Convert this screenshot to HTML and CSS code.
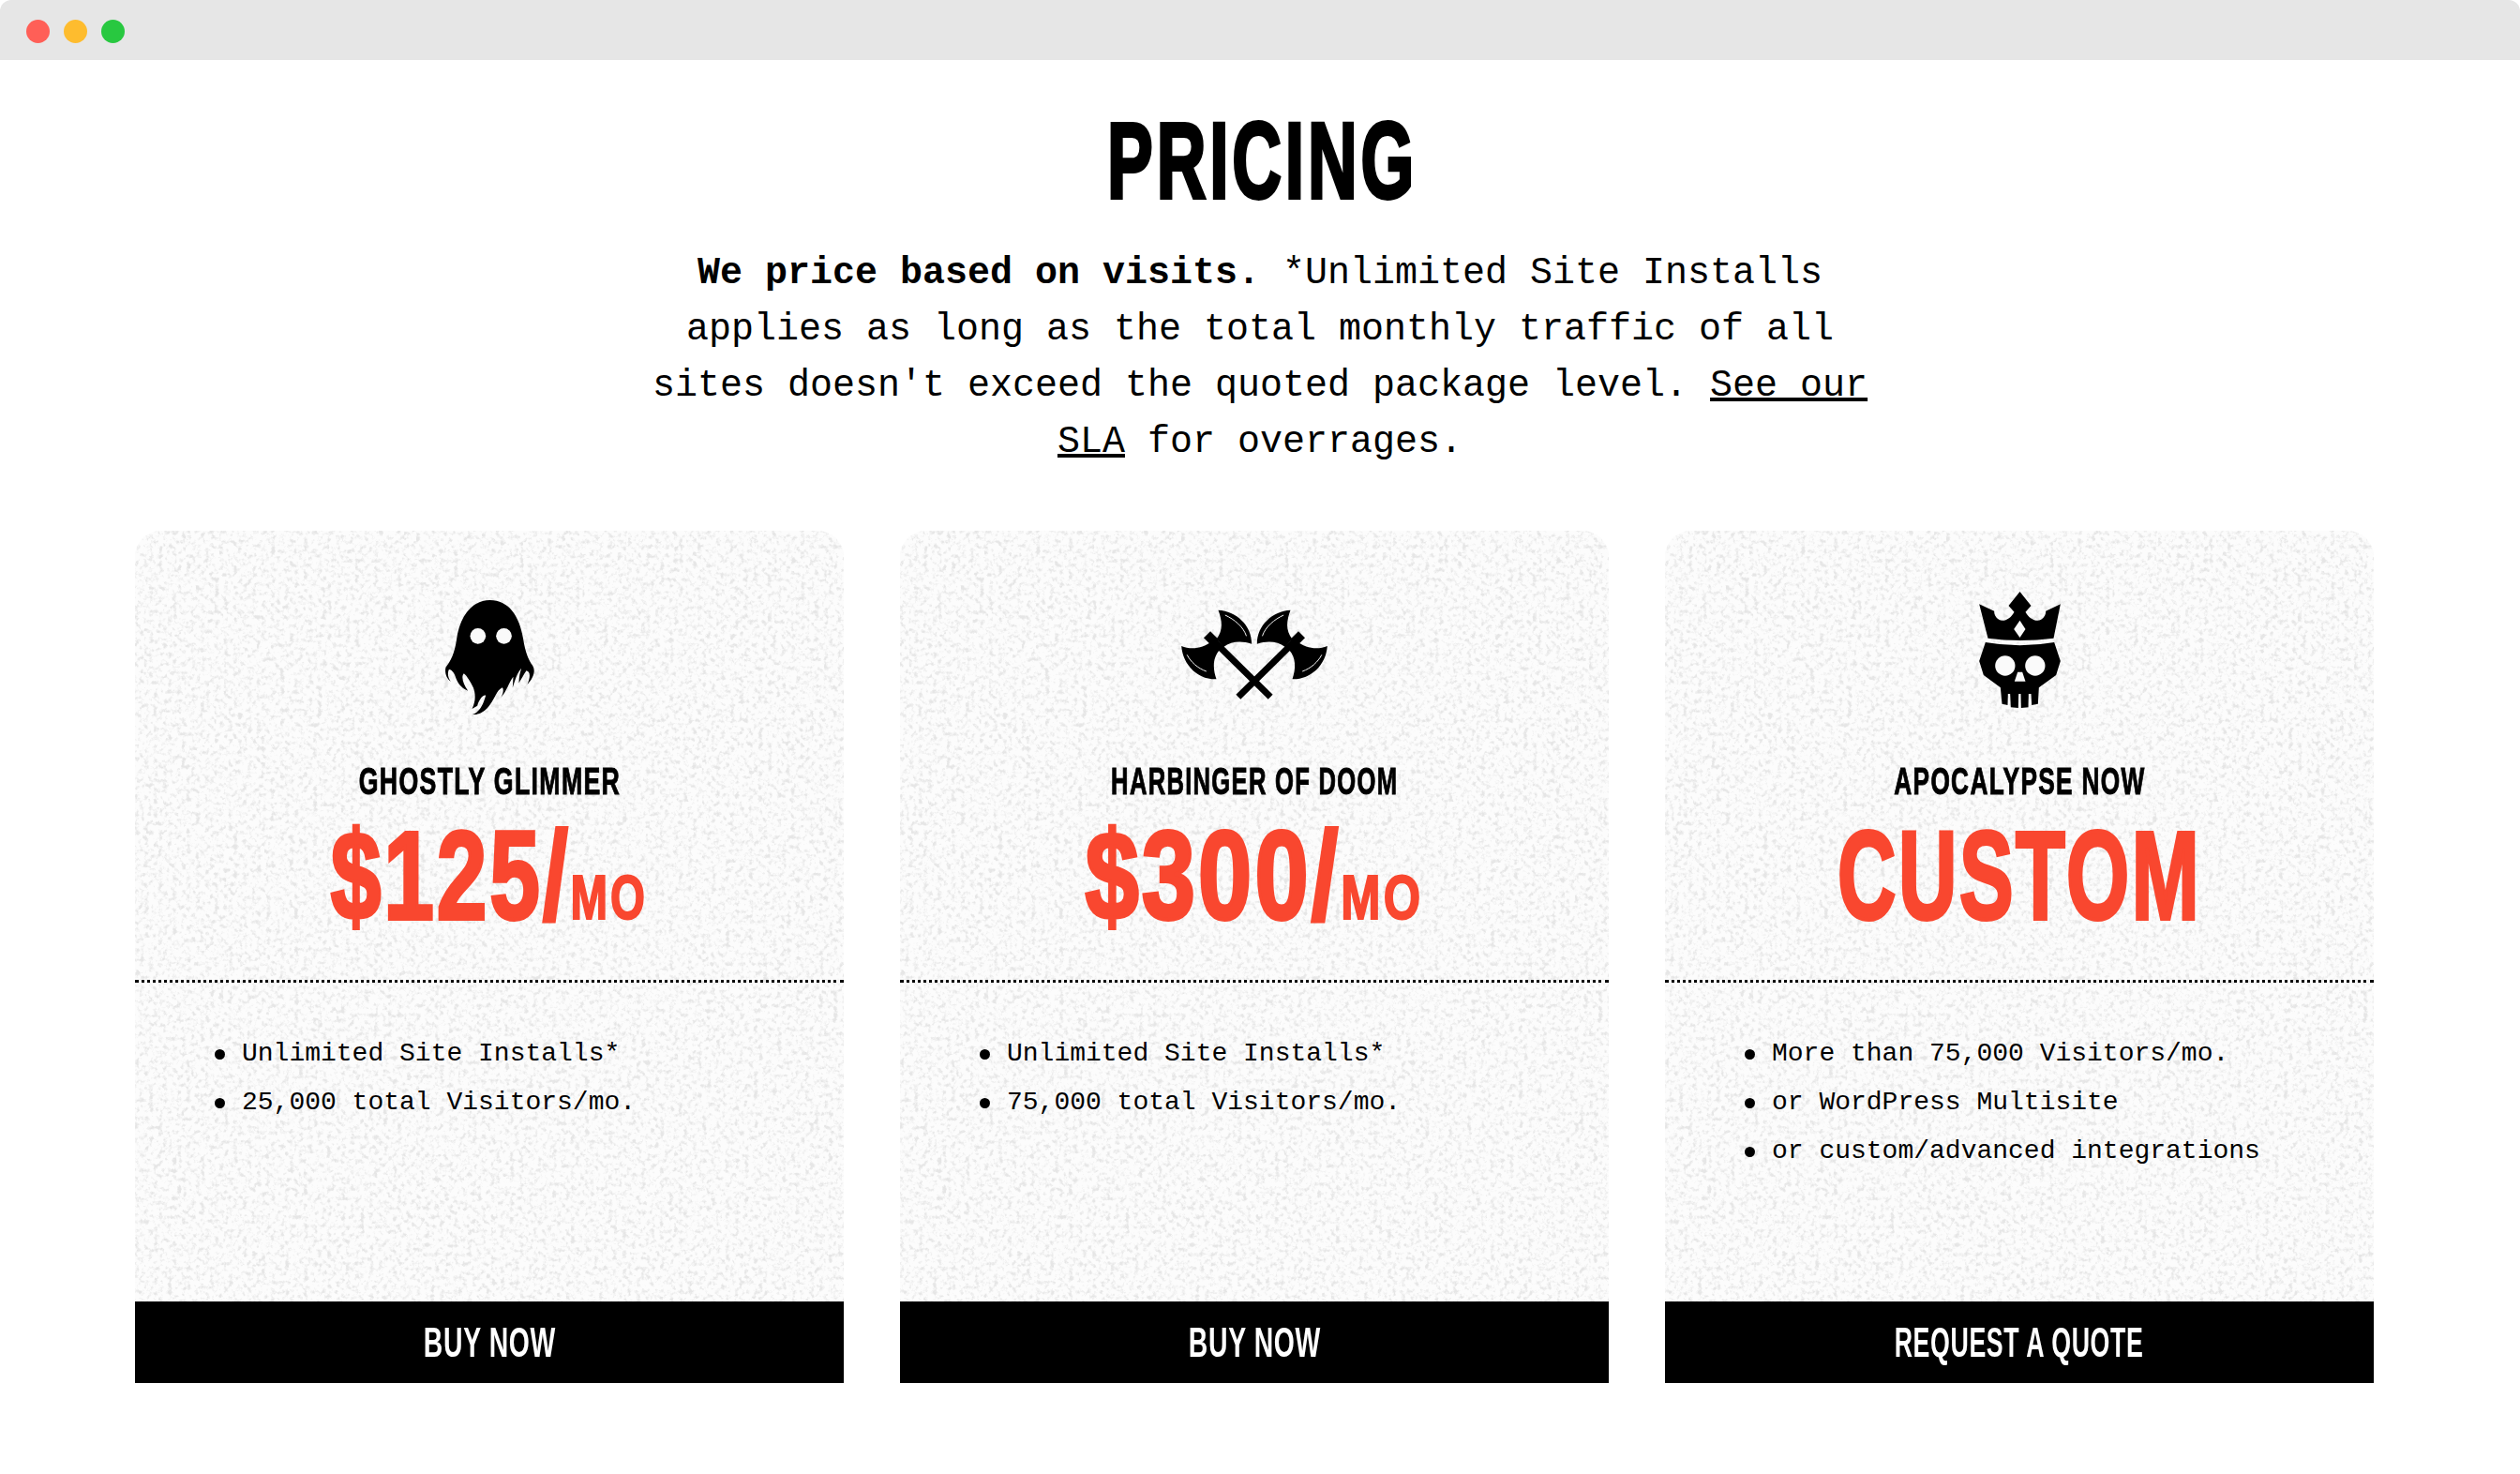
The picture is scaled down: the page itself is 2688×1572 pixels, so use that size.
FILE: index.html
```html
<!DOCTYPE html>
<html lang="en">
<head>
<meta charset="utf-8">
<title>Pricing</title>
<link rel="stylesheet" href="styles.css">
</head>
<body>
<header class="chrome">
  <span class="dot dot-red"></span>
  <span class="dot dot-yellow"></span>
  <span class="dot dot-green"></span>
</header>
<main class="page">
  <h1 class="title"><span class="fit-title">PRICING</span></h1>
  <p class="intro"><strong>We price based on visits.</strong> *Unlimited Site Installs applies as long as the total monthly traffic of all sites doesn't exceed the quoted package level. <a href="#">See our SLA</a> for overrages.</p>
  <section class="plans">
    <article class="plan">
      <div class="plan-head">
        <svg class="icon icon-ghost" viewBox="100 0 290 480" aria-hidden="true">
          <path d="M245 60C305 60 340 110 352 185C358 225 368 250 382 270C392 285 385 310 365 330C375 305 375 290 362 286C352 300 348 310 338 325C338 305 342 290 346 278C330 295 325 320 318 340L320 305C305 325 300 350 280 372C288 360 290 345 285 340C265 350 262 375 245 395C235 410 215 428 190 426C210 418 222 400 232 365C222 362 210 380 205 398L188 408C200 385 200 360 192 340C185 325 170 300 162 295C152 305 160 330 175 350C150 340 140 320 135 305C130 290 120 280 114 282C108 295 112 310 120 320C105 310 100 290 104 275C120 255 132 230 138 190C148 110 190 60 245 60Z"/>
          <circle class="knock" cx="207" cy="175" r="25"/>
          <circle class="knock" cx="290" cy="175" r="25"/>
        </svg>
        <h2 class="plan-name"><span class="fit-name-a">GHOSTLY GLIMMER</span></h2>
        <div class="price"><span class="fit-price-a">$125/<small class="per">MO</small></span></div>
      </div>
      <ul class="features">
        <li>Unlimited Site Installs*</li>
        <li>25,000 total Visitors/mo.</li>
      </ul>
      <a class="cta" href="#"><span class="fit-cta-a">BUY NOW</span></a>
    </article>
    <article class="plan">
      <div class="plan-head">
        <svg class="icon icon-axes" viewBox="60 -30 467 480" aria-hidden="true">
          <defs>
            <g id="axe">
              <path class="haft" d="M345 340L150 148"/>
              <path class="knob" d="M142 140L170 168"/>
              <path d="M178 62C235 65 285 110 285 170C255 160 220 160 195 180L172 155C195 125 190 95 178 62Z"/>
              <path d="M60 177C90 190 130 185 155 163L182 190C160 215 160 250 172 283C115 285 65 240 60 177Z"/>
              <path class="glint" d="M200 78C230 92 258 115 268 145"/>
              <path class="glint" d="M78 205C90 228 112 248 140 258"/>
            </g>
          </defs>
          <use href="#axe"/>
          <use href="#axe" transform="matrix(-1 0 0 1 587 0)"/>
        </svg>
        <h2 class="plan-name"><span class="fit-name-b">HARBINGER OF DOOM</span></h2>
        <div class="price"><span class="fit-price-b">$300/<small class="per">MO</small></span></div>
      </div>
      <ul class="features">
        <li>Unlimited Site Installs*</li>
        <li>75,000 total Visitors/mo.</li>
      </ul>
      <a class="cta" href="#"><span class="fit-cta-a">BUY NOW</span></a>
    </article>
    <article class="plan">
      <div class="plan-head">
        <svg class="icon icon-crown" viewBox="92 0 260 480" aria-hidden="true">
          <path d="M222 33L258 78L240 98C250 118 275 132 290 122C302 114 305 105 305 95L352 73L330 182Q222 196 120 182L92 73L140 95C140 105 143 114 155 122C170 132 194 118 204 98L186 78Z"/>
          <path class="knock" d="M222 125L240 153L222 180L203 153Z"/>
          <path d="M112 195Q222 215 332 195L352 255L338 300L283 340L280 392L260 396L258 360L250 360L249 403L226 405L225 360L218 360L217 405L193 403L191 360L184 360L183 396L165 392L160 340L106 300L92 255Z"/>
          <circle class="knock" cx="175" cy="270" r="32"/>
          <circle class="knock" cx="271" cy="270" r="32"/>
          <path class="knock" d="M215 290H230L240 320H205Z"/>
        </svg>
        <h2 class="plan-name"><span class="fit-name-c">APOCALYPSE NOW</span></h2>
        <div class="price"><span class="fit-price-c">CUSTOM</span></div>
      </div>
      <ul class="features">
        <li>More than 75,000 Visitors/mo.</li>
        <li>or WordPress Multisite</li>
        <li>or custom/advanced integrations</li>
      </ul>
      <a class="cta" href="#"><span class="fit-cta-b">REQUEST A QUOTE</span></a>
    </article>
  </section>
</main>
</body>
</html>
```

FILE: styles.css
```css
* { box-sizing: border-box; }

html, body {
  margin: 0;
  background: #fff;
}

body {
  color: #000;
  font-family: "Liberation Mono", monospace;
}

.chrome {
  display: flex;
  align-items: center;
  gap: 15px;
  height: 64px;
  padding: 2px 0 0 28px;
  background: #e6e6e6;
  border-radius: 12px 12px 0 0;
}

.dot {
  width: 25px;
  height: 25px;
  border-radius: 50%;
}
.dot-red { background: #ff5f57; }
.dot-yellow { background: #febc2e; }
.dot-green { background: #28c840; }

.page {
  padding: 0 156px 0 144px;
}

.title {
  margin: 0 0 0 18px;
  height: 198px;
  display: flex;
  align-items: center;
  justify-content: center;
  padding-top: 16px;
  font: 700 115px/1 "Liberation Sans", sans-serif;
  letter-spacing: 6px;
  -webkit-text-stroke: 4px #000;
}

/* The display face is condensed; squeeze the Arial-metric fallback to its width. */
[class*="fit-"] {
  display: inline-block;
  white-space: nowrap;
}
.fit-title { transform: scaleX(0.635); }
.fit-name-a { transform: scaleX(0.667); }
.fit-name-b { transform: scaleX(0.64); }
.fit-name-c { transform: scaleX(0.656); }
.fit-price-a { transform: scaleX(0.72); }
.fit-price-b { transform: scaleX(0.768); }
.fit-price-c { transform: scaleX(0.645); }
.fit-cta-a { transform: scaleX(0.645); }
.fit-cta-b { transform: scaleX(0.608); }

.intro {
  width: 1320px;
  margin: 0 0 64px 540px;
  font-size: 40px;
  line-height: 60px;
  text-align: center;
}
.intro a { color: inherit; }

.plans {
  display: grid;
  grid-template-columns: repeat(3, 756px);
  gap: 60px;
}

.plan {
  display: flex;
  flex-direction: column;
  min-height: 909px;
  border-radius: 28px 28px 0 0;
  background-color: #fcfcfc;
  background-image: url("data:image/svg+xml;utf8,<svg xmlns='http://www.w3.org/2000/svg' width='760' height='920'><filter id='n' x='0' y='0' width='100%' height='100%' color-interpolation-filters='sRGB'><feTurbulence type='fractalNoise' baseFrequency='0.2' numOctaves='4' seed='7'/><feColorMatrix values='0 0 0 0 0.9 0 0 0 0 0.9 0 0 0 0 0.9 2.6 2.6 0 0 -2.55'/></filter><rect width='760' height='920' filter='url(%23n)'/></svg>");
}

.plan-head {
  display: flex;
  flex-direction: column;
  align-items: center;
  padding: 54px 0 51px;
  border-bottom: 3px dotted #000;
}

.icon {
  display: block;
  height: 160px;
  fill: #000;
}
.icon-ghost { width: 97px; }
.icon-axes { width: 156px; }
.icon-crown { width: 87px; }
.knock { fill: #fafafa; }
.haft { fill: none; stroke: #000; stroke-width: 21; }
.knob { fill: none; stroke: #000; stroke-width: 30; }
.glint { fill: none; stroke: #f4f4f4; stroke-width: 3; }

.plan-name {
  margin: 28px 0 0;
  font: 700 40px/50px "Liberation Sans", sans-serif;
  letter-spacing: 2px;
  -webkit-text-stroke: 1px #000;
}

.price {
  margin-top: 16px;
  height: 120px;
  color: #f9472f;
  font: 700 134px/120px "Liberation Sans", sans-serif;
  letter-spacing: 4px;
  -webkit-text-stroke: 4px #f9472f;
}

.per {
  font-size: 66px;
  -webkit-text-stroke: 2px #f9472f;
}

.features {
  flex: 1;
  margin: 0;
  padding: 50px 0 0 85px;
  list-style: none;
  font-size: 28px;
  line-height: 52px;
}

.features li {
  display: flex;
  align-items: center;
  gap: 18px;
}

.features li::before {
  content: "";
  flex: none;
  width: 11px;
  height: 11px;
  border-radius: 50%;
  background: #000;
}

.cta {
  display: flex;
  align-items: center;
  justify-content: center;
  height: 87px;
  background: #000;
  color: #fff;
  text-decoration: none;
  font: 700 44px/1 "Liberation Sans", sans-serif;
  letter-spacing: 1px;
}
```
